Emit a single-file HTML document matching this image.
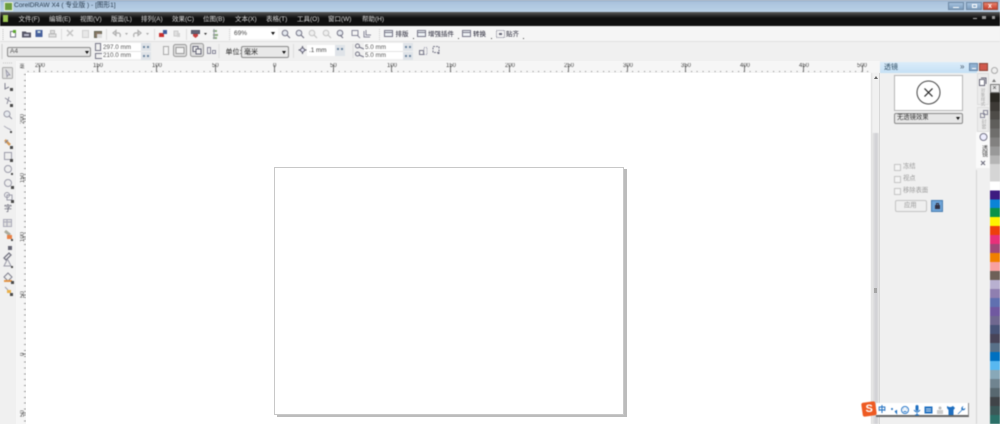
<!DOCTYPE html>
<html lang="zh"><head><meta charset="utf-8"><title>CorelDRAW X4</title>
<style>
html,body{margin:0;padding:0;background:#f0f0f0}
#a{position:relative;width:1000px;height:424px;overflow:hidden;background:#f0f0f0;font-family:"Liberation Sans","Noto Sans CJK SC",sans-serif;color:#333}
#a div,#a span.t{position:absolute}
.t{white-space:nowrap;line-height:1;font-size:6.5px}
.b{filter:blur(.45px)}
.sel{background:#e4e4e4;border:1px solid #8a8a8a;border-radius:2px;box-sizing:border-box}
.inp{background:#fff}
.arr{width:0;height:0;border-left:2.5px solid transparent;border-right:2.5px solid transparent;border-top:3px solid #111}
.spin{width:14px;height:8px;background:#dfe3e8}
.spin:before,.spin:after{content:"";position:absolute;top:3px;width:2px;height:2px;background:#6f86a0}
.spin:before{left:2px}.spin:after{left:6px}
.m{top:17px;color:#dcdcdc;font-size:6.5px}
.r{top:2px;font-size:6px;color:#444}
.v{left:19.5px;font-size:6px;color:#444;transform:rotate(-90deg);transform-origin:left top}
svg{position:absolute;overflow:visible}
</style></head><body><div id="a">

<div class="b" style="left:0;top:0;width:1000px;height:61px">
<!-- title bar -->
<div style="left:0;top:0;width:1000px;height:13px;background:linear-gradient(#8595ab 0,#a9c2dc 12%,#bcd3e8 100%)"></div>
<div style="left:4px;top:2px;width:9px;height:9px;background:#6c9d3e;border:1px solid #e8f0d8;box-sizing:border-box"></div>
<span class="t" style="left:14px;top:2.5px;font-size:6.6px;color:#2c3e50">CorelDRAW X4 ( 专业版 ) - [图形1]</span>
<div style="left:948px;top:2px;width:16px;height:8px;background:linear-gradient(#a5c2de,#7d9dbd);border:1px solid #6e88a4;box-sizing:border-box"><div style="left:4px;top:4px;width:6px;height:1px;background:#fff"></div></div>
<div style="left:966px;top:2px;width:16px;height:8px;background:linear-gradient(#a5c2de,#7d9dbd);border:1px solid #6e88a4;box-sizing:border-box"><div style="left:5px;top:1px;width:5px;height:4px;border:1px solid #fff;box-sizing:border-box"></div></div>
<div style="left:983px;top:2px;width:15px;height:8px;background:linear-gradient(#e8836e,#c8402c);border:1px solid #96493c;box-sizing:border-box"><span class="t" style="left:4px;top:0;color:#fff;font-size:7px;font-weight:bold">x</span></div>
<!-- menu bar -->
<div style="left:0;top:12px;width:1000px;height:14px;background:linear-gradient(#5b5b5b 0,#2a2a2a 25%,#0f0f0f 45%,#111 100%)"></div>
<div style="left:3px;top:15px;width:5px;height:7px;background:#9cc653"></div>
<span class="t m" style="left:18.5px">文件(F)</span>
<span class="t m" style="left:49px">编辑(E)</span>
<span class="t m" style="left:80px">视图(V)</span>
<span class="t m" style="left:111px">版面(L)</span>
<span class="t m" style="left:141px">排列(A)</span>
<span class="t m" style="left:172px">效果(C)</span>
<span class="t m" style="left:203px">位图(B)</span>
<span class="t m" style="left:235px">文本(X)</span>
<span class="t m" style="left:266px">表格(T)</span>
<span class="t m" style="left:297px">工具(O)</span>
<span class="t m" style="left:328px">窗口(W)</span>
<span class="t m" style="left:362px">帮助(H)</span>
<div style="left:973px;top:18px;width:4px;height:1px;background:#aaa"></div>
<div style="left:982px;top:16px;width:4px;height:3px;background:#999"></div>
<div style="left:992px;top:16px;width:3px;height:3px;background:#999"></div>
<!-- toolbar 1 -->
<div style="left:0;top:26px;width:1000px;height:15px;background:#f5f5f5;border-bottom:1px solid #e2e2e2"></div>
<!-- property bar -->
<div style="left:0;top:42px;width:1000px;height:19px;background:#f0f0f0"></div>
<svg width="1000" height="61" style="left:0;top:0" fill="none" stroke-width="1">
 <path d="M3 29v11" stroke="#bbb" stroke-dasharray="1 1"/>
 <path d="M10.500 31.500h4l1 1v4.500h-5z" stroke="#778" fill="#fff"/><rect x="13" y="30" width="3" height="3" fill="#5ba82e"/>
 <path d="M22.500 32h3l1 1h4v4h-8z" fill="#556" stroke="#556"/><rect x="24" y="34" width="5" height="2" fill="#bbc"/>
 <rect x="36" y="30.500" width="6" height="6" fill="#46609c" stroke="#46609c"/><rect x="37.500" y="31" width="3" height="2" fill="#cdd"/>
 <path d="M49 34h7v3h-7zM50.500 30.500h4v3h-4z" stroke="#bbb" fill="#e0e0e0"/>
 <path d="M61.500 29v11" stroke="#ddd"/>
 <path d="M67 30l6 6M73 30l-6 6" stroke="#c4c4c4" stroke-width="1.500"/>
 <rect x="82.500" y="30.500" width="6" height="7" stroke="#d0d0d0" fill="#e8e8e8"/>
 <rect x="94.500" y="31.500" width="7" height="6" stroke="#665" fill="#887766"/><rect x="97" y="34" width="5" height="4" fill="#ddd"/>
 <path d="M106.500 29v11" stroke="#ddd"/>
 <path d="M113 33l3-2.500v5zM115 33h4q2 1 1 4" stroke="#b0b0b0" stroke-width="1.200"/>
 <path d="M125 33h3l-1.500 2z" fill="#aaa"/>
 <path d="M141 33l-3-2.500v5zM139 33h-4q-2 1-1 4" stroke="#b0b0b0" stroke-width="1.200"/>
 <path d="M146 33h3l-1.500 2z" fill="#aaa"/>
 <path d="M154.500 29v11" stroke="#ddd"/>
 <rect x="159" y="33" width="5" height="4" fill="#c83030"/><rect x="163" y="30" width="4" height="4" fill="#405c9c"/>
 <rect x="174" y="31" width="4" height="5" stroke="#ccc" fill="#e0e0e0"/><rect x="177" y="33" width="3" height="4" fill="#d0d0d0"/>
 <path d="M186.500 29v11" stroke="#ddd"/>
 <rect x="191.500" y="30.500" width="8" height="3" fill="#667" stroke="#556"/><path d="M193 34h5v2l-2.500 2-2.500-2z" fill="#c84040"/>
 <path d="M204 33h3l-1.500 2z" fill="#333"/>
 <path d="M213 30h4v2h-4zM213 34h5v2h-5zM213 37h4v2h-4z" fill="#8fad85"/><path d="M214 29v10" stroke="#99a"/>
 <path d="M229.500 29v11" stroke="#ccc" stroke-dasharray="1 1"/>
 <g stroke="#778" fill="#e4e8ee">
 <circle cx="285" cy="33" r="2.800"/><circle cx="299" cy="33" r="2.800"/>
 <circle cx="312" cy="33" r="2.800" stroke="#c4c4c4" fill="#eee"/><circle cx="326" cy="33" r="2.800" stroke="#c4c4c4" fill="#eee"/><circle cx="340" cy="33" r="2.800"/>
 </g>
 <path d="M287 35l3 3M301 35l3 3M340 35l3 3" stroke="#778" stroke-width="1.200"/>
 <path d="M314 35l3 3M328 35l3 3" stroke="#c4c4c4" stroke-width="1.200"/>
 <rect x="352" y="30.500" width="6" height="5" stroke="#889"/><path d="M357 35l3 3" stroke="#889"/>
 <path d="M364 31v6h6M366 30v5h5" stroke="#889"/>
 <path d="M379.500 29v11" stroke="#ccc" stroke-dasharray="1 1"/>
 <g stroke="#778" fill="#eef2f5">
 <rect x="384.500" y="30.500" width="8" height="6"/><rect x="417.500" y="30.500" width="8" height="6"/><rect x="462.500" y="30.500" width="8" height="6"/>
 </g>
 <path d="M385 32.500h8M417.500 32.500h8M462.500 32.500h8" stroke="#778"/>
 <rect x="496.500" y="30.500" width="8" height="7" stroke="#778" stroke-dasharray="1 1"/><rect x="499" y="33" width="3" height="2" fill="#667"/>
 <path d="M413 38h1v1h-1zM458 38h1v1h-1zM491 38h1v1h-1zM523 38h1v1h-1z" fill="#444"/>
 <!-- property bar icons -->
 <path d="M2 44v15" stroke="#ccc"/>
 <rect x="95.500" y="43.500" width="5" height="7" stroke="#778"/>
 <rect x="95.500" y="53.500" width="7" height="5" stroke="#778"/>
 <rect x="163.500" y="46.500" width="5" height="8" stroke="#aaa" fill="#f4f4f4"/>
 <rect x="173.500" y="44.500" width="13" height="12" rx="2" fill="#ddd" stroke="#999"/>
 <rect x="176" y="47.500" width="8" height="6" fill="#f4f4f4" stroke="#999"/>
 <rect x="190.500" y="43.500" width="13" height="13" rx="2" fill="#ddd" stroke="#999"/>
 <rect x="193" y="46.500" width="5" height="5" stroke="#667" fill="#eee"/><rect x="196" y="49" width="5" height="5" stroke="#667" fill="#eee"/>
 <rect x="207.500" y="47.500" width="3" height="6" stroke="#889"/><rect x="212.500" y="50.500" width="3" height="3" stroke="#889"/>
 <path d="M219 44v14" stroke="#ddd"/>
 <path d="M293.500 44v14" stroke="#ddd"/>
 <path d="M302.500 46v8M298.500 50h8" stroke="#667" stroke-width="1.200"/><circle cx="302.500" cy="50" r="2" fill="#dde" stroke="#667"/>
 <path d="M353 44v14" stroke="#ddd"/>
 <circle cx="357.500" cy="46" r="2" stroke="#778"/><path d="M359 47l5 2" stroke="#778" stroke-width="1.200"/>
 <circle cx="357.500" cy="54" r="2" stroke="#778"/><path d="M359 55l5 2" stroke="#778" stroke-width="1.200"/>
 <rect x="419.500" y="50.500" width="4" height="4" stroke="#778"/><rect x="424" y="47.500" width="3" height="7" stroke="#99a" stroke-dasharray="1 1"/>
 <rect x="433" y="46.500" width="6" height="6" stroke="#778" stroke-dasharray="2 1"/><rect x="437.500" y="52" width="2" height="2" fill="#778"/>
</svg>
<span class="t" style="left:395.500px;top:31.500px;font-size:6.500px;color:#223">排版</span>
<span class="t" style="left:428px;top:31.500px;font-size:6.500px;color:#223">增强插件</span>
<span class="t" style="left:473px;top:31.500px;font-size:6.500px;color:#223">转换</span>
<span class="t" style="left:506px;top:31.500px;font-size:6.500px;color:#223">贴齐</span>
<div class="inp" style="left:231px;top:28px;width:47px;height:11px"></div>
<span class="t" style="left:234px;top:30.500px;font-size:6.500px;color:#444">69%</span>
<div class="arr" style="left:271px;top:32px"></div>
<div class="sel" style="left:7px;top:47px;width:84px;height:10px"></div>
<span class="t" style="left:10px;top:49px;color:#555">A4</span>
<div class="arr" style="left:85px;top:50.500px"></div>
<div class="inp" style="left:102px;top:43px;width:39px;height:16px"></div>
<div style="left:102px;top:51px;width:39px;height:1px;background:#e4e4e4"></div>
<span class="t" style="left:103px;top:44.500px;font-size:6.300px;color:#555">297.0 mm</span>
<span class="t" style="left:103px;top:53px;font-size:6.300px;color:#555">210.0 mm</span>
<div class="spin" style="left:141px;top:43px;width:10px"></div>
<div class="spin" style="left:141px;top:52px;width:10px"></div>
<span class="t" style="left:225.500px;top:48.500px;font-size:7px;color:#222">单位:</span>
<div class="sel" style="left:241px;top:46px;width:48px;height:12px;background:#e8e8e8"></div>
<span class="t" style="left:244px;top:48.500px;font-size:7px;color:#222">毫米</span>
<div class="arr" style="left:282px;top:50.500px"></div>
<div class="inp" style="left:307px;top:45px;width:28px;height:11px"></div>
<span class="t" style="left:309px;top:47.500px;font-size:6.300px;color:#444">.1 mm</span>
<div class="spin" style="left:335px;top:45px;width:10px;height:11px"></div>
<div class="inp" style="left:364px;top:43px;width:39px;height:16px"></div>
<div style="left:364px;top:51px;width:39px;height:1px;background:#e4e4e4"></div>
<span class="t" style="left:365px;top:44.500px;font-size:6.300px;color:#555">5.0 mm</span>
<span class="t" style="left:365px;top:53px;font-size:6.300px;color:#555">5.0 mm</span>
<div class="spin" style="left:403px;top:43px;width:10px"></div>
<div class="spin" style="left:403px;top:52px;width:10px"></div>
</div>

<!-- left toolbox -->
<div style="left:0;top:61px;width:16px;height:363px;background:#f0f0f0;border-right:1px solid #d8d8d8"></div>
<svg class="b" width="20" height="300" style="left:0;top:61px;opacity:.8" fill="none">
 <path d="M3 2h10" stroke="#bbb" stroke-dasharray="1 1"/>
 <rect x="2.500" y="6.500" width="10" height="11" rx="1" fill="#ddd" stroke="#999"/>
 <path d="M6 9l4 5-2 0-1 2z" fill="#ccd" stroke="#778" stroke-width=".7"/>
 <path d="M5 22v6l4-2" stroke="#667"/><rect x="10" y="27" width="3" height="3" fill="#222"/>
 <path d="M5 37l6 4M9 36l-2 7" stroke="#778"/><rect x="10" y="43" width="3" height="3" fill="#222"/>
 <circle cx="7" cy="53" r="3" stroke="#889" fill="#e4e8ee"/><path d="M9 55l3 3" stroke="#778"/>
 <path d="M4 65l3 2 4 2" stroke="#99a"/><rect x="10" y="70" width="2" height="2" fill="#222"/>
 <path d="M5 79l5 5" stroke="#c98030" stroke-width="2.500"/><path d="M8 79l-3 3" stroke="#667"/><rect x="10" y="85" width="3" height="3" fill="#222"/>
 <rect x="4.500" y="91.500" width="7" height="7" stroke="#889" fill="#eee"/><rect x="10" y="98" width="3" height="3" fill="#222"/>
 <circle cx="8" cy="108" r="3.500" stroke="#889" fill="#eee"/><rect x="11" y="112" width="2" height="2" fill="#222"/>
 <circle cx="8" cy="122" r="3.500" stroke="#889" fill="#eee"/><rect x="11" y="125" width="3" height="3" fill="#222"/>
 <circle cx="7" cy="134" r="2.500" stroke="#889"/><rect x="7" y="134" width="5" height="5" stroke="#889"/><rect x="11" y="139" width="3" height="3" fill="#222"/>
 <rect x="3.500" y="158.500" width="8" height="7" stroke="#99a" fill="#ddd"/><path d="M3.500 161h8M7 158v7" stroke="#99a"/>
 <path d="M5 170l5 4" stroke="#998" stroke-width="3"/><rect x="7" y="174" width="5" height="4" fill="#e8661c"/><rect x="11" y="178" width="2" height="2" fill="#222"/>
 <path d="M4 197l5-5 2 2-5 5z" stroke="#556" stroke-width="1.300"/><rect x="8" y="185" width="4" height="4" fill="#445"/>
 <path d="M7 199l-3 6h7l-3-6z" stroke="#889" fill="#eee"/><rect x="11" y="205" width="2" height="2" fill="#222"/>
 <path d="M8 212l-4 4 4 4 4-4z" stroke="#667" fill="#eee"/><path d="M4 220h8" stroke="#e08020" stroke-width="2"/><rect x="11" y="220" width="3" height="3" fill="#222"/>
 <path d="M5 226l3 3" stroke="#889"/><rect x="7" y="229" width="4" height="3" fill="#e8a020"/><rect x="10" y="232" width="3" height="3" fill="#222"/>
</svg>
<span class="t b" style="left:4px;top:204.500px;font-size:8px;color:#556">字</span>

<!-- rulers -->
<div style="left:16px;top:61px;width:864px;height:12px;background:#f6f6f6"></div>
<div style="left:16px;top:61px;width:10px;height:363px;background:#f6f6f6"></div>
<div class="b" style="left:26px;top:70.500px;width:845px;height:1.500px;background:repeating-linear-gradient(90deg,#888 0,#888 1px,transparent 1px,transparent 5.870px);background-position:1.600px 0"></div>
<div class="b" style="left:24px;top:73px;width:2px;height:351px;background:repeating-linear-gradient(180deg,#999 0,#999 1px,transparent 1px,transparent 5.870px);background-position:0 1px"></div>
<span class="t b" style="left:19.500px;top:65px;font-size:5px;color:#444">毫</span>
<svg class="b" width="880" height="424" style="left:0;top:0"><path d="M39.500 65v7M97.500 65v7M156.500 65v7M215.500 65v7M274.500 65v7M333.500 65v7M391.500 65v7M450.500 65v7M509.500 65v7M568.500 65v7M627.500 65v7M685.500 65v7M744.500 65v7M803.500 65v7M862.500 65v7" stroke="#777"/><path d="M22 119h4M22 178h4M22 237h4M22 295h4M22 354h4M22 413h4" stroke="#888"/></svg>
<div class="b" style="left:0;top:61px;width:880px;height:12px">
<span class="t r" style="left:35px">200</span><span class="t r" style="left:93px">150</span><span class="t r" style="left:152px">100</span><span class="t r" style="left:212px">50</span><span class="t r" style="left:273px">0</span><span class="t r" style="left:330px">50</span><span class="t r" style="left:387px">100</span><span class="t r" style="left:446px">150</span><span class="t r" style="left:505px">200</span><span class="t r" style="left:564px">250</span><span class="t r" style="left:623px">300</span><span class="t r" style="left:681px">350</span><span class="t r" style="left:740px">400</span><span class="t r" style="left:799px">450</span><span class="t r" style="left:857px">500</span>
</div>
<span class="t b v" style="top:123.500px">200</span>
<span class="t b v" style="top:182.500px">150</span>
<span class="t b v" style="top:241.500px">100</span>
<span class="t b v" style="top:298px">50</span>
<span class="t b v" style="top:356px">0</span>
<span class="t b v" style="top:417px">50</span>

<!-- canvas -->
<div style="left:26px;top:73px;width:845px;height:351px;background:#fff"></div>
<div style="left:274px;top:167px;width:349.500px;height:247.500px;background:#fff;border:1px solid #c8c8c8;box-sizing:border-box"></div>
<div style="left:623.500px;top:169px;width:3px;height:248px;background:#bcbcbc"></div>
<div style="left:277px;top:414.500px;width:349.500px;height:2.500px;background:#bcbcbc"></div>

<!-- vertical scrollbar -->
<div class="b" style="left:871px;top:73px;width:9px;height:351px;background:#f1f1f1;border-left:1px solid #ddd;box-sizing:border-box"></div>
<div class="b" style="left:872px;top:133px;width:7px;height:291px;background:linear-gradient(90deg,#e6e6e6,#cfcfd3 60%,#e2e2e2);"></div>
<div style="left:873.500px;top:288px;width:3.500px;height:5px;background:#a5a5a5"></div>
<div style="left:873.500px;top:76px;width:0;height:0;border-left:2.500px solid transparent;border-right:2.500px solid transparent;border-bottom:3px solid #666"></div>

<!-- docker panel -->
<div class="b" style="left:880px;top:61px;width:110px;height:363px;background:#f0f0f0">
 <div style="left:0;top:1px;width:97px;height:11px;background:linear-gradient(#dcedfa,#c4e0f5)"></div>
 <span class="t" style="left:4px;top:2.500px;font-size:7px;color:#2f4d63">透镜</span>
 <span class="t" style="left:80px;top:1.500px;font-size:8px;color:#456">»</span>
 <div style="left:89px;top:2px;width:9px;height:8px;background:#8fb0d0;border:1px solid #6a88a8;box-sizing:border-box"><div style="left:2px;top:4px;width:4px;height:1px;background:#fff"></div></div>
 <div style="left:99px;top:2px;width:9px;height:8px;background:#d0584c;border:1px solid #8a4438;box-sizing:border-box"></div>
 <div style="left:14px;top:13.500px;width:69px;height:36px;background:#fff;border:1px solid #b5b5b5;box-sizing:border-box"></div>
 <svg width="30" height="30" style="left:34px;top:17px" fill="none"><circle cx="14.500" cy="14.500" r="11.500" stroke="#444" stroke-width="1"/><path d="M10.500 10.500l8 8M18.500 10.500l-8 8" stroke="#222" stroke-width="1.200"/></svg>
 <div class="sel" style="left:14px;top:52px;width:69px;height:11px;background:#e6e6e6"></div>
 <span class="t" style="left:17px;top:54px;font-size:6.300px;color:#333">无透镜效果</span>
 <div class="arr" style="left:76px;top:56px"></div>
 <div style="left:14px;top:103px;width:5px;height:5px;background:#f4f4f4;border:1px solid #c4c4c4"></div>
 <span class="t" style="left:23px;top:102.500px;font-size:6.300px;color:#999">冻结</span>
 <div style="left:14px;top:115px;width:5px;height:5px;background:#f4f4f4;border:1px solid #c4c4c4"></div>
 <span class="t" style="left:23px;top:114.500px;font-size:6.300px;color:#999">视点</span>
 <div style="left:14px;top:127px;width:5px;height:5px;background:#f4f4f4;border:1px solid #c4c4c4"></div>
 <span class="t" style="left:23px;top:126.500px;font-size:6.300px;color:#999">移除表面</span>
 <div style="left:15px;top:139px;width:32px;height:12px;background:#efefef;border:1px solid #c4c4c4;border-radius:2px;box-sizing:border-box"></div>
 <span class="t" style="left:24px;top:142px;font-size:6.300px;color:#999">应用</span>
 <div style="left:51px;top:139px;width:12px;height:12px;background:#6fa5d8;border:1px solid #4a7eb0;box-sizing:border-box"><div style="left:2.500px;top:4px;width:5px;height:4px;background:#334"></div><div style="left:3.500px;top:1.500px;width:3px;height:3px;border:1px solid #334;border-bottom:0;box-sizing:border-box"></div></div>
</div>
<div style="left:879px;top:73px;width:1px;height:351px;background:#d8d8d8"></div>
<!-- docker tabs -->
<div class="b" style="left:977px;top:73px;width:13px;height:351px;background:#f0f0f0">
 <div style="left:0;top:0;width:12px;height:32px;background:#ececec;border:1px solid #ddd;box-sizing:border-box"></div>
 <div style="left:0;top:34px;width:12px;height:25px;background:#ececec;border:1px solid #ddd;box-sizing:border-box"></div>
 <div style="left:-1px;top:59px;width:14px;height:36px;background:#fafafa"></div>
 <div style="left:-1px;top:97px;width:1px;height:254px;background:#d4d4d4"></div>
 <svg width="13" height="100" style="left:0;top:0" fill="none"><rect x="2.500" y="6.500" width="5" height="6" fill="#fff" stroke="#667"/><path d="M4 5h5v6" stroke="#667"/><rect x="3.500" y="40.500" width="4" height="4" stroke="#889"/><rect x="6.500" y="37.500" width="4" height="4" stroke="#889"/><circle cx="6.500" cy="64" r="3.500" fill="#eef" stroke="#778"/><path d="M4 88l4 4M8 88l-4 4" stroke="#667"/></svg>
 <span class="t" style="left:3.500px;top:15px;font-size:4.500px;color:#aaa;writing-mode:vertical-rl;line-height:1">对象样式</span>
 <span class="t" style="left:3.500px;top:46px;font-size:5px;color:#aaa;writing-mode:vertical-rl;line-height:1">封套</span>
 <span class="t" style="left:3.500px;top:72px;font-size:6px;color:#444;writing-mode:vertical-rl;line-height:1">透镜</span>
</div>

<!-- palette -->
<div class="b" style="left:990px;top:61px;width:10px;height:363px;background:#f0f0f0;overflow:hidden">
 <div style="left:1px;top:6px;width:7px;height:7px;background:#eee;border:1px solid #aaa;border-radius:50%;box-sizing:border-box"></div>
 <div style="left:2px;top:18px;width:0;height:0;border-left:2px solid transparent;border-right:2px solid transparent;border-bottom:3px solid #777"></div>
 <div style="left:0;top:23px;width:10px;height:9px;background:#e4e4e4;border:1px solid #777;box-sizing:border-box"><span class="t" style="left:1.500px;top:0;font-size:7px;color:#444">×</span></div>
 <div style="left:0;top:32px;width:10px;height:332px;background:linear-gradient(#2a2823 0,#2a2823 8.900px,#3d3a36 8.900px,#3d3a36 17.800px,#4e4c48 17.800px,#4e4c48 26.700px,#5f5e5b 26.700px,#5f5e5b 35.600px,#6f6e6c 35.600px,#6f6e6c 44.500px,#828180 44.500px,#828180 53.400px,#999 53.400px,#999 62.300px,#b5b5b5 62.300px,#b5b5b5 71.200px,#d5d5d5 71.200px,#d5d5d5 88.700px,#fff 88.700px,#fff 97.700px,#3d1a80 97.700px,#3d1a80 106.300px,#0a84d6 106.300px,#0a84d6 115px,#0a9248 115px,#0a9248 124px,#fff200 124px,#fff200 133px,#ee3f0c 133px,#ee3f0c 142px,#e8307a 142px,#e8307a 151px,#a04878 151px,#a04878 160px,#f08000 160px,#f08000 169px,#f8a0a0 169px,#f8a0a0 178px,#6e6058 178px,#6e6058 187px,#b8b0d0 187px,#b8b0d0 196px,#8f7fb0 196px,#8f7fb0 205px,#6070b0 205px,#6070b0 214px,#7058a0 214px,#7058a0 223px,#706890 223px,#706890 232px,#485478 232px,#485478 241px,#484458 241px,#484458 250px,#587088 250px,#587088 259px,#0070c0 259px,#0070c0 268px,#58b8f0 268px,#58b8f0 277px,#88a8b8 277px,#88a8b8 286px,#708490 286px,#708490 295px,#586870 295px,#586870 304px,#404448 304px,#404448 313px,#3c5858 313px,#3c5858 322px,#2c7068 322px,#2c7068 332px)"></div>
</div>

<!-- IME bar -->
<div class="b" style="left:861px;top:402px;width:109px;height:15px">
 <div style="left:15px;top:1px;width:93px;height:14px;background:#fff;border-right:1px solid #888;border-bottom:2px solid #666;box-sizing:border-box"></div>
 <div style="left:1px;top:0;width:14px;height:14px;background:#ee5a22;border-radius:2px;transform:rotate(-8deg)"></div>
 <span class="t" style="left:4.500px;top:1.500px;font-size:11px;font-weight:bold;color:#fff">S</span>
 <span class="t" style="left:17px;top:3.500px;font-size:8px;color:#1f6fc0;font-weight:bold">中</span>
 <svg width="109" height="15" style="left:0;top:0" fill="none">
  <circle cx="31" cy="7" r="1" fill="#1f6fc0"/><path d="M34 9l1.500 2v-3" stroke="#1f6fc0" stroke-width="1.200"/>
  <circle cx="44" cy="8" r="3.500" stroke="#2a78c8"/><path d="M42.500 7h.5M45 7h.5M42.500 9.500h3" stroke="#2a78c8"/>
  <rect x="54.500" y="3" width="3" height="6" rx="1.500" fill="#1f6fc0"/><path d="M53 8q3 4 6 0M56 11v2M54 13h4" stroke="#1f6fc0"/>
  <rect x="63.500" y="4.500" width="8" height="7" fill="#1f6fc0"/><path d="M65 7h5M65 9h5" stroke="#cde"/>
  <circle cx="79" cy="6" r="1.500" fill="#bbb"/><rect x="76" y="8" width="6" height="4" fill="#ccc"/>
  <path d="M86 4l2 1h2l2-1 2 2-1.500 2v5h-5V8L86 6z" fill="#1f6fc0"/>
  <path d="M96.500 12l4-4q-1-3 2-4l-1 2 1 1 2-1q-1 3-3 2l-4 4z" fill="#1f6fc0"/>
 </svg>
</div>

</div></body></html>
